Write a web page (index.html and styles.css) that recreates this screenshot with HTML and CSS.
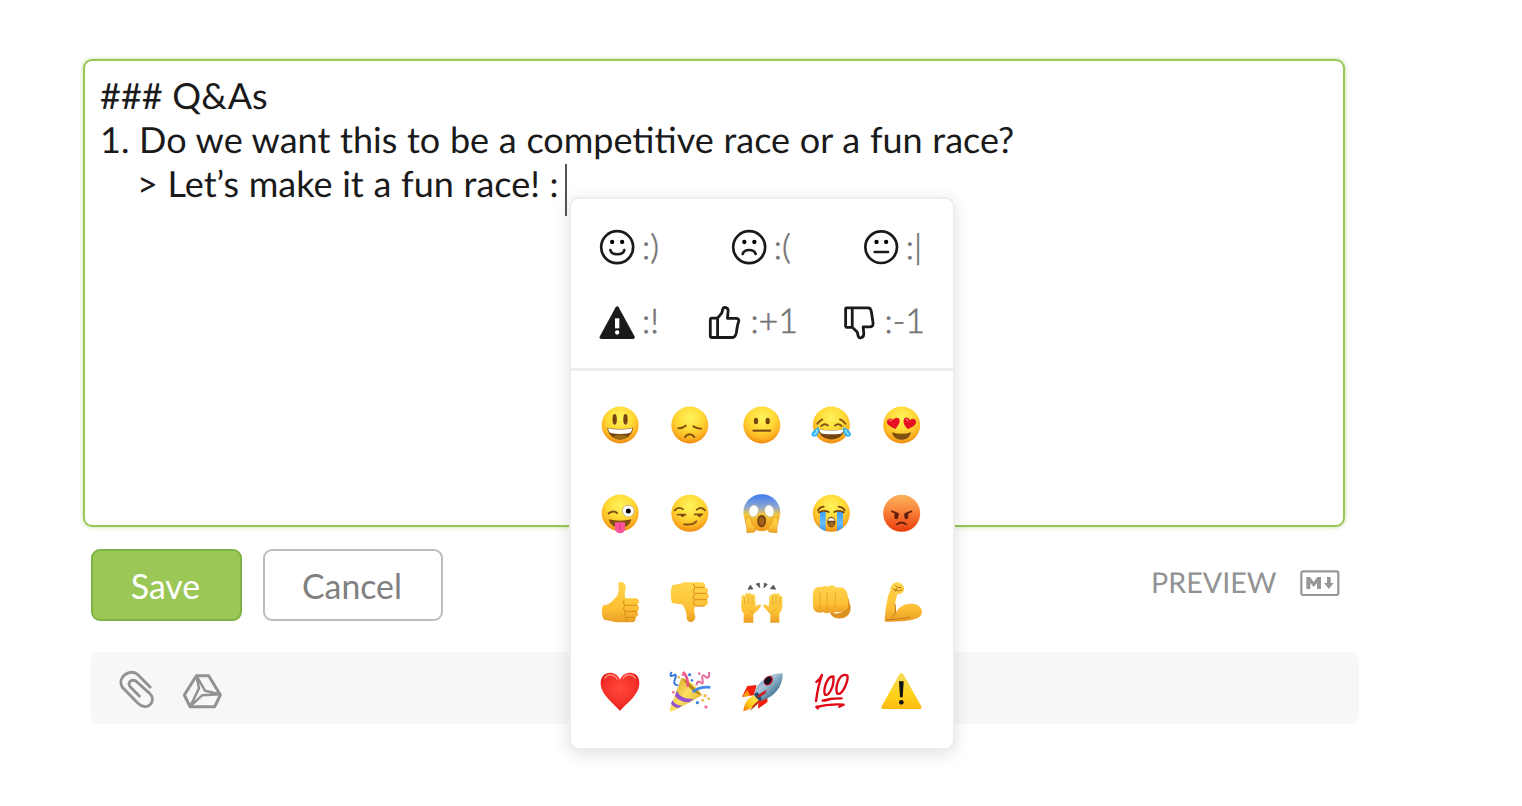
FILE: index.html
```html
<!DOCTYPE html>
<html lang="en">
<head>
<meta charset="utf-8">
<title>Comment editor</title>
<link rel="stylesheet" href="styles.css">
</head>
<body>
<svg class="defs" width="0" height="0" aria-hidden="true">
  <defs>
    <radialGradient id="face" cx=".5" cy=".3" r=".7"><stop offset="0" stop-color="#fff35c"/><stop offset=".5" stop-color="#ffd935"/><stop offset=".8" stop-color="#fdb324"/><stop offset="1" stop-color="#ee8a13"/></radialGradient>
    <linearGradient id="scream" x1="0" y1="0" x2="0" y2="1"><stop offset="0" stop-color="#3d7df0"/><stop offset=".35" stop-color="#8ea6d4"/><stop offset=".55" stop-color="#f3c63b"/><stop offset="1" stop-color="#f39a18"/></linearGradient>
    <linearGradient id="rage" x1="0" y1="0" x2="0" y2="1"><stop offset="0" stop-color="#fbb35a"/><stop offset=".45" stop-color="#f9823a"/><stop offset="1" stop-color="#ea3b0c"/></linearGradient>
    <linearGradient id="skin" x1="0" y1="0" x2="0" y2="1"><stop offset="0" stop-color="#ffd54c"/><stop offset=".65" stop-color="#fdc035"/><stop offset="1" stop-color="#eb9d25"/></linearGradient>
    <linearGradient id="tear" x1="0" y1="0" x2="0" y2="1"><stop offset="0" stop-color="#3c9cf2"/><stop offset=".6" stop-color="#66bdfb"/><stop offset="1" stop-color="#3a93ea"/></linearGradient>
    <radialGradient id="heart" cx=".5" cy=".4" r=".65"><stop offset="0" stop-color="#ff4a3b"/><stop offset=".7" stop-color="#f22d27"/><stop offset="1" stop-color="#c30c12"/></radialGradient>
    <linearGradient id="warn" x1="0" y1="0" x2="0" y2="1"><stop offset="0" stop-color="#f4dc5c"/><stop offset=".6" stop-color="#ffd21c"/><stop offset="1" stop-color="#fdbb10"/></linearGradient>
    <linearGradient id="cone" x1="0" y1="0" x2="1" y2="1"><stop offset="0" stop-color="#c99a1c"/><stop offset=".5" stop-color="#ffe063"/><stop offset="1" stop-color="#c9951e"/></linearGradient>
    <linearGradient id="hull" x1="0" y1="0" x2="1" y2="1"><stop offset="0" stop-color="#2f7fc4"/><stop offset=".4" stop-color="#a9c6d8"/><stop offset=".65" stop-color="#5f8aa8"/><stop offset="1" stop-color="#1f4f78"/></linearGradient>
    <linearGradient id="flame" x1="1" y1="0" x2="0" y2="1"><stop offset="0" stop-color="#fff370"/><stop offset=".6" stop-color="#ffca18"/><stop offset="1" stop-color="#f06c10"/></linearGradient>
  </defs>
</svg>

<main class="composer">
  <div class="editor">### Q&amp;As
1. Do we want this to be a competitive race or a fun race?
<span class="indent">&gt; Let’s make it a fun race! :</span><span class="caret"></span></div>

  <div class="actions">
    <button class="btn btn-save">Save</button>
    <button class="btn btn-cancel">Cancel</button>
    <span class="preview">PREVIEW</span>
    <svg class="markdown" viewBox="539 210 120 80"><rect x="543" y="214" width="111" height="71" rx="6" fill="none" stroke="#979797" stroke-width="6.5"/><path d="M558 267V231H569L580 246L591 231H602V267H590V249L580 261L570 249V267ZM620 231H631V249H640L625.500 267L611 249H620Z" fill="#979797"/></svg>
  </div>

  <div class="attachments">
    <svg class="clip" viewBox="117 480 106 117"><path d="M213 534L174 494C152 473 109 501 127 532L174 580C200 607 233 574 209 550L169 514C152 504 141 520 152 532L181 561" fill="none" stroke="#929292" stroke-width="8.500"/></svg>
    <svg class="drive" viewBox="307 488 122 110"><g fill="none" stroke="#929292" stroke-width="9" stroke-linejoin="round"><path d="M350 496H387L422 554L405 589H331L314 554Z"/><path d="M350 496L376 541L422 552M331 589L367 555L422 552M350 496L358 534L331 589" stroke-width="7.500"/></g></svg>
  </div>

  <div class="picker">
    <div class="shortcuts">
      <div class="shortcut-row shortcut-faces">
        <span class="shortcut"><svg width="36" height="36" viewBox="102 118 108 108"><g fill="none" stroke="#1a1a1a" stroke-width="8" stroke-linecap="round"><circle cx="156.500" cy="172.500" r="48"/><path d="M136 181C140 198 174 198 178 181"/></g><circle cx="141.500" cy="157" r="6.500"/><circle cx="171.500" cy="157" r="6.500"/></svg>:)</span>
        <span class="shortcut"><svg width="36" height="36" viewBox="498 118 108 108"><g fill="none" stroke="#1a1a1a" stroke-width="8" stroke-linecap="round"><circle cx="552.500" cy="172.500" r="48"/><path d="M533 193C538 177 567 177 572 193"/></g><circle cx="538" cy="157" r="6.500"/><circle cx="568" cy="157" r="6.500"/></svg>:(</span>
        <span class="shortcut"><svg width="36" height="36" viewBox="894 118 108 108"><g fill="none" stroke="#1a1a1a" stroke-width="8" stroke-linecap="round"><circle cx="948.500" cy="172.500" r="47.500"/><path d="M929 187H969"/></g><circle cx="934.500" cy="157" r="6.500"/><circle cx="963.500" cy="157" r="6.500"/></svg>:|</span>
      </div>
      <div class="shortcut-row shortcut-signs">
        <span class="shortcut"><svg width="36" height="36" viewBox="102 344 108 108"><path d="M152 351Q156.500 344 161 351L208 437Q212 445 204 446H109Q101 445 105 437Z" fill="#1a1a1a"/><path d="M150 384H163V414H150Z" fill="#fff"/><circle cx="156.500" cy="426.500" r="6.500" fill="#fff"/></svg>:!</span>
        <span class="shortcut shortcut-thumb shortcut-up"><svg width="33" height="36" viewBox="430 344 100 108"><g fill="none" stroke="#1a1a1a" stroke-width="8.500" stroke-linejoin="round"><path d="M441 383H459L472 367L475 355C478 348 491 351 491 361L489 384H515C526 384 524 395 521 399L518 413L516 427C514 438 511 442 504 442H441C436 442 437 437 437 434V389C437 386 437 383 441 383ZM459 383V442"/></g></svg>:+1</span>
        <span class="shortcut shortcut-thumb"><svg width="33" height="36" viewBox="836 344 100 108"><g fill="none" stroke="#1a1a1a" stroke-width="8.500" stroke-linejoin="round"><path d="M847 352H912C918 352 921 356 922 364L927 397C928 406 925 410 917 410H897L899 429C900 444 884 448 882 437L879 425L864 411H847C842 410 844 405 844 402V358C844 355 843 352 847 352ZM864 352V411"/></g></svg>:-1</span>
      </div>
    </div>

    <div class="emoji-grid">
      <svg viewBox="25 25 132 132"><circle cx="91.500" cy="91" r="55.500" fill="url(#face)"/><g fill="#744510"><ellipse cx="75" cy="74" rx="6.500" ry="16"/><ellipse cx="107.500" cy="74" rx="6.500" ry="16"/><path d="M53 99Q91 107 130 99C126 145 57 145 53 99Z"/></g><path d="M55 101Q91 108 128 101Q127 112 121 115Q91 121 62 115Q56 110 55 101Z" fill="#fff"/><path d="M68 127Q91 113 116 127Q91 145 68 127" fill="#9b6b13"/></svg>
      <svg viewBox="237 25 132 132"><circle cx="299.500" cy="91" r="55.500" fill="url(#face)"/><g fill="none" stroke="#805015" stroke-width="6" stroke-linecap="round"><path d="M265 101Q278 101 287 93M310 95Q320 101 333 102M285 127Q299 110 313 127" /></g></svg>
      <svg viewBox="447 25 132 132"><circle cx="515.500" cy="91" r="55.500" fill="url(#face)"/><g fill="#744510"><ellipse cx="498" cy="79" rx="6.500" ry="10"/><ellipse cx="533" cy="79" rx="6.500" ry="10"/><path d="M488 105H543V111H488Z"/></g></svg>
      <svg viewBox="148 25 132 132"><circle cx="215" cy="91" r="55.500" fill="url(#face)"/><g fill="none" stroke="#805015" stroke-width="5.500" stroke-linecap="round"><path d="M173 87Q181 77 188 74M241 74Q250 77 257 87M185 94Q195 84 205 93M226 93Q235 84 246 94"/></g><path d="M176 103Q215 111 254 103C250 145 181 145 176 103Z" fill="#744510"/><path d="M178 104Q215 111 252 104Q250 115 244 117Q215 121 187 117Q179 113 178 104Z" fill="#fff"/><path d="M178 96Q181 123 165 126C149 126 152 110 178 96ZM251 96Q248 123 264 126C280 126 278 110 251 96Z" fill="#35b4f6"/><path d="M172 105Q171 117 163 119M257 105Q260 117 267 119" fill="none" stroke="#8be0ff" stroke-width="5"/></svg>
      <svg viewBox="360 25 132 132"><circle cx="425" cy="91" r="55.500" fill="url(#face)"/><path d="M406 103C391 96 379 90 381 80C384 68 396 71 399 77C402 68 418 65 419 77C420 87 412 96 406 103ZM443 103C434 94 429 86 431 76C433 65 447 67 450 77C454 70 466 70 468 81C469 92 455 98 443 103Z" fill="#e51022"/><path d="M396 113Q425 122 453 113C449 143 401 143 396 113Z" fill="#805013"/><path d="M386 78Q390 73 395 80M437 76Q440 70 445 80" fill="none" stroke="#ff6870" stroke-width="4"/></svg>

      <svg viewBox="25 291 132 132"><circle cx="91.500" cy="354" r="55.500" fill="url(#face)"/><path d="M57 355Q72 345 82 354" fill="none" stroke="#805015" stroke-width="6" stroke-linecap="round"/><circle cx="116" cy="348" r="18.500" fill="#b9a67c"/><circle cx="116" cy="348" r="16.500" fill="#fff"/><circle cx="116" cy="348" r="7.500"/><path d="M57 373Q91 381 125 373C119 408 64 408 57 373Z" fill="#805013"/><path d="M76 382H106V402C105 419 78 419 76 402Z" fill="#fb559b"/><path d="M91 387V403" stroke="#d83579" stroke-width="3"/></svg>
      <svg viewBox="237 291 132 132"><circle cx="299.500" cy="355" r="55.500" fill="url(#face)"/><g fill="none" stroke="#805015" stroke-width="5.500" stroke-linecap="round"><path d="M254 346Q265 333 279 343M320 344Q334 333 345 346M263 359H286M314 358H337M282 388Q309 391 319 379" /></g><path d="M271 360Q275 370 283 363V358ZM322 360Q326 370 334 363V358Z" fill="#744510"/></svg>
      <svg viewBox="447 291 132 132"><circle cx="515.500" cy="353" r="55.500" fill="url(#scream)"/><g fill="#fff" stroke="#c0bba0" stroke-width="2"><ellipse cx="491" cy="348" rx="14" ry="18" transform="rotate(15 491 348)"/><ellipse cx="538" cy="348" rx="14" ry="18" transform="rotate(-15 538 348)"/></g><path d="M515 360C534 360 531 397 515 397C499 397 496 360 515 360Z" fill="#744510"/><ellipse cx="515" cy="379" rx="8" ry="12" fill="#a3601a"/><g fill="url(#skin)" stroke="#dc941d" stroke-width="2"><path d="M468 371C476 361 485 372 486 386C494 391 498 401 494 411L471 413Q471 391 466 381Z"/><path d="M563 371C555 361 546 372 545 386C537 391 533 401 537 411L561 413Q559 391 565 381Z"/></g></svg>
      <svg viewBox="148 291 132 132"><circle cx="215" cy="355" r="55.500" fill="url(#face)"/><path d="M181 350H198V408Q188 405 180 398ZM232 350H250V397Q242 405 232 408Z" fill="url(#tear)"/><g fill="none" stroke="#744510" stroke-width="5.500" stroke-linecap="round"><path d="M175 346Q180 336 192 335M237 335Q249 336 255 346M178 352Q192 344 207 351M224 351Q237 344 252 352"/></g><path d="M215 365C232 365 231 397 215 397C199 397 198 365 215 365Z" fill="#744510"/><path d="M205 377Q206 369 215 369Q224 369 225 377Z" fill="#fff"/><ellipse cx="215" cy="388" rx="9" ry="6" fill="#a4681d"/></svg>
      <svg viewBox="360 291 132 132"><circle cx="425" cy="355" r="55.500" fill="url(#rage)"/><g fill="none" stroke="#64200f" stroke-width="5.500" stroke-linecap="round"><path d="M396 349Q408 353 415 358M435 358Q443 353 454 349M411 388Q425 377 438 388"/></g><ellipse cx="409" cy="363" rx="6" ry="10" fill="#64200f"/><ellipse cx="439" cy="363" rx="6" ry="10" fill="#64200f"/></svg>

      <svg viewBox="25 31 132 132"><path d="M86 40C96 32 109 40 108 55Q103 75 108 86H139C151 88 150 102 142 105C151 110 149 122 142 125C148 132 145 141 137 143C141 152 134 159 125 158H87C72 158 61 152 45 151C35 145 34 112 41 107C55 107 66 97 76 86C87 76 89 60 86 50Z" fill="url(#skin)"/><g fill="none" stroke="#d88c1c" stroke-width="3"><path d="M103 91Q99 101 105 107H142M104 107Q99 119 106 125H142M107 125Q104 138 110 143H137M106 143L112 155"/></g></svg>
      <svg viewBox="237 31 132 132"><path d="M247 46C262 44 273 42 281 38H333C344 38 348 45 344 53C355 55 357 65 351 71C360 76 357 86 351 90C358 99 351 110 340 110H315Q310 124 316 141C315 161 291 163 290 145C291 131 286 118 278 105C266 101 256 104 247 101C241 88 241 57 247 46Z" fill="url(#skin)"/><g fill="none" stroke="#d88c1c" stroke-width="3"><path d="M310 43L315 53H344M315 54Q307 66 314 71H350M314 72Q306 84 313 90H350M312 91Q308 103 316 109H343"/></g></svg>
      <svg viewBox="447 31 132 132"><path d="M461 159V131C451 124 454 99 455 80Q461 70 464 83V77Q468 65 475 73Q480 64 486 76Q493 68 496 83L497 111Q505 102 513 105C516 110 500 126 490 133V159Z" fill="url(#skin)"/><path d="M568 159V131C579 124 577 99 577 82Q573 73 569 81V75Q563 65 558 75Q552 64 547 76Q540 71 538 83L536 112Q528 102 519 106C519 111 533 125 541 133V159Z" fill="url(#skin)"/><g stroke="#de9c25" stroke-width="2" fill="none"><path d="M464 82V104M475 75V104M486 77V106M548 77V106M558 75V104M569 82V105M473 117L492 132M559 117L540 132"/></g><path d="M481 46L489 58L474 59ZM498 43L508 40L509 54ZM523 40L532 44L522 55ZM550 46L557 59L541 57Z" fill="#555" stroke="#555" stroke-width="2"/></svg>
      <svg viewBox="148 31 132 132"><path d="M211 125C232 140 250 128 262 112L266 84C269 92 270 103 273 112C274 132 261 144 246 146C229 148 213 143 211 125Z" fill="#dd9022"/><path d="M161 65C164 53 175 51 184 53C193 48 200 49 206 51C213 44 225 47 230 54C244 50 255 54 260 64C267 80 266 95 265 114C258 124 240 131 228 126C222 132 215 130 211 128C202 133 195 130 190 127C176 132 163 127 161 116C159 99 159 81 161 65Z" fill="url(#skin)"/><path d="M181 69Q179 85 182 119M203 68Q200 96 204 120M228 69Q223 96 228 118" fill="none" stroke="#e3a62d" stroke-width="3"/></svg>
      <svg viewBox="360 31 132 132"><path d="M374 151L377 118L384 79L391 63Q390 44 408 38Q425 39 430 49C436 62 430 73 412 74L405 101L407 129C419 107 443 99 466 104C484 109 491 126 482 138C467 155 410 156 375 156Z" fill="url(#skin)"/><path d="M406 47L413 54L425 53M399 58L414 64L427 60M410 55L406 66M405 102L407 129L397 143M378 151Q418 149 450 143" fill="none" stroke="#be791d" stroke-width="3"/></svg>

      <svg viewBox="25 297 132 132"><path d="M91 423C82 408 34 377 33 341C32 300 80 300 91 329C102 300 151 300 149 341C148 378 100 408 91 423Z" fill="url(#heart)"/><path d="M45 326C54 309 76 313 83 328M100 325C109 310 131 312 138 327" fill="none" stroke="#ffaaa0" stroke-width="5" opacity=".65"/></svg>
      <svg viewBox="236 297 132 132"><path d="M273 324C289 323 329 357 335 376Q292 403 242 425Q236 422 239 416Z" fill="url(#cone)"/><path d="M259 363Q274 390 310 387L297 397Q267 396 254 377ZM246 391Q256 407 276 407L264 414Q249 411 242 401Z" fill="#9451cf"/><path d="M275 324Q299 337 333 375Q307 372 275 324" fill="#b78316"/><path d="M291 350C295 331 291 319 278 306" fill="none" stroke="#ee5688" stroke-width="8"/><path d="M307 366Q327 349 360 352" fill="none" stroke="#438ce7" stroke-width="8"/><path d="M244 306Q235 321 248 317Q262 307 253 330Q248 346 264 346" fill="none" stroke="#3979dc" stroke-width="6"/><path d="M318 346Q321 328 333 339Q340 345 336 325Q334 309 345 320Q359 330 356 306" fill="none" stroke="#e96a9d" stroke-width="6"/><g fill="#f27196"><circle cx="278" cy="314" r="4"/><circle cx="327" cy="311" r="4"/><circle cx="249" cy="367" r="4"/><circle cx="347" cy="411" r="5"/></g><g fill="#4586dc"><circle cx="298" cy="314" r="5"/><circle cx="305" cy="331" r="4"/><circle cx="321" cy="398" r="5"/></g><g fill="#f2b64b"><circle cx="265" cy="322" r="4"/><circle cx="344" cy="377" r="5"/><circle cx="355" cy="386" r="4"/><circle cx="337" cy="391" r="4"/></g></svg>
      <svg viewBox="447 297 132 132"><path d="M500 345L472 348L456 380L492 376Z" fill="#f21f0d"/><path d="M472 359L457 380L481 378Z" fill="#ff9a0a"/><path d="M533 371L532 397L504 416L506 382Z" fill="#f21f0d"/><path d="M492 376L475 386Q462 400 460 424Q485 416 497 404L510 386Z" fill="url(#flame)"/><path d="M490 406L512 385L503 402L480 423Z" fill="#b82c0c"/><path d="M492 374C497 344 529 309 578 310C579 351 552 382 514 392Z" fill="url(#hull)"/><path d="M492 374Q500 362 505 370Q517 381 514 392Q501 390 492 374Z" fill="#254d72"/><ellipse cx="535" cy="332" rx="12" ry="16" fill="#c41525" transform="rotate(40 535 332)"/><ellipse cx="534" cy="332" rx="9" ry="12" fill="#112" transform="rotate(40 534 332)"/><path d="M499 382Q505 373 530 359L526 370Q513 382 499 382" fill="#cf1914"/></svg>
      <svg viewBox="148 297 132 132"><g fill="none" stroke="#df0715" stroke-width="7" stroke-linecap="round" stroke-linejoin="round"><path d="M170 336Q180 330 187 315Q175 347 169 393"/><path d="M222 320C202 315 190 360 196 374C210 381 226 339 220 320M258 315C237 312 225 354 233 371C248 377 267 333 263 316"/><path d="M189 392Q216 384 246 385M170 411Q207 401 252 404M252 404L239 410M170 411L175 415M218 386L196 392"/></g></svg>
      <svg viewBox="360 297 132 132"><path d="M418 313Q424 305 430 313L483 407Q488 416 479 417H370Q361 416 366 407Z" fill="url(#warn)"/><path d="M417 334H431L428 382H420Z" fill="#111"/><circle cx="424" cy="397" r="7" fill="#111"/></svg>
    </div>
  </div>
</main>
</body>
</html>
```
FILE: styles.css
```css
* {
  box-sizing: border-box;
}

body {
  margin: 0;
  background: #fff;
  font-family: Lato, Carlito, sans-serif;
  color: #1a1a1a;
  text-rendering: geometricPrecision;
}

.defs {
  position: absolute;
}

.composer {
  position: relative;
  width: 1522px;
  height: 806px;
  padding: 59px 163px 0 83px;
  overflow: hidden;
}

.editor {
  width: 1262px;
  height: 468px;
  padding: 11.500px 15px;
  border: 2px solid #9ac658;
  border-radius: 9px;
  box-shadow: 0 0 4px rgba(139, 195, 74, .55);
  font-size: 36px;
  line-height: 44px;
  word-spacing: .5px;
  white-space: pre-wrap;
}

.indent {
  padding-left: 37px;
}

.caret {
  display: inline-block;
  width: 2px;
  height: 52px;
  margin: -10px 0 -17px 6px;
  vertical-align: -2px;
  background: #555;
}

.actions {
  display: flex;
  align-items: center;
  height: 72px;
  margin: 22px 19px 0 8px;
}

.btn {
  height: 72px;
  padding: 3px 2px 0 0;
  border: 2px solid #bdbdbd;
  border-radius: 9px;
  background: #fff;
  color: #808080;
  font: 33.800px/1 Lato, sans-serif;
}

.btn-save {
  width: 151px;
  margin-right: 21px;
  border-color: #7cb342;
  background: #9bc757;
  color: #fff;
}

.btn-cancel {
  width: 180px;
}

.preview {
  margin: -5px 23.500px 0 auto;
  color: #929292;
  font-size: 28.700px;
}

.markdown {
  width: 40px;
  height: 26.700px;
  margin-top: -4px;
}

.attachments {
  display: flex;
  align-items: flex-start;
  gap: 28px;
  width: 1268px;
  height: 72px;
  margin: 31px 0 0 8px;
  padding: 18px 28px;
  border-radius: 9px;
  background: #f7f7f7;
}

.clip {
  width: 35.300px;
  height: 39px;
}

.drive {
  width: 40.700px;
  height: 36.700px;
  margin-top: 2.700px;
}

.picker {
  position: absolute;
  left: 569px;
  top: 197px;
  width: 386px;
  height: 553px;
  border: 2px solid #ededed;
  border-radius: 10px;
  background: #fff;
  box-shadow: 0 4px 18px rgba(0, 0, 0, .12);
}

.shortcuts {
  display: flex;
  flex-direction: column;
  gap: 39.700px;
  height: 172px;
  padding: 30.300px 28px 0 28px;
  border-bottom: 3px solid #ededed;
}

.shortcut-row {
  display: flex;
  justify-content: space-between;
}

.shortcut-faces {
  padding-right: 3px;
}

.shortcut {
  display: flex;
  align-items: center;
  gap: 7px;
  height: 36px;
  color: #757575;
  font-size: 34px;
  font-weight: 300;
  line-height: 34px;
  -webkit-text-stroke: .6px #757575;
}

.shortcut-signs .shortcut {
  padding-bottom: 3px;
}

.shortcut-signs .shortcut svg {
  margin-bottom: -3px;
}

.shortcut-signs .shortcut-thumb {
  gap: 9px;
}

.shortcut-up {
  margin-left: 5px;
}

.emoji-grid {
  display: grid;
  grid-template-columns: repeat(5, 70.300px);
  grid-auto-rows: 88.600px;
  place-items: center;
  padding: 10px 0 0 14.200px;
}

.emoji-grid svg {
  width: 44px;
  height: 44px;
}
```
